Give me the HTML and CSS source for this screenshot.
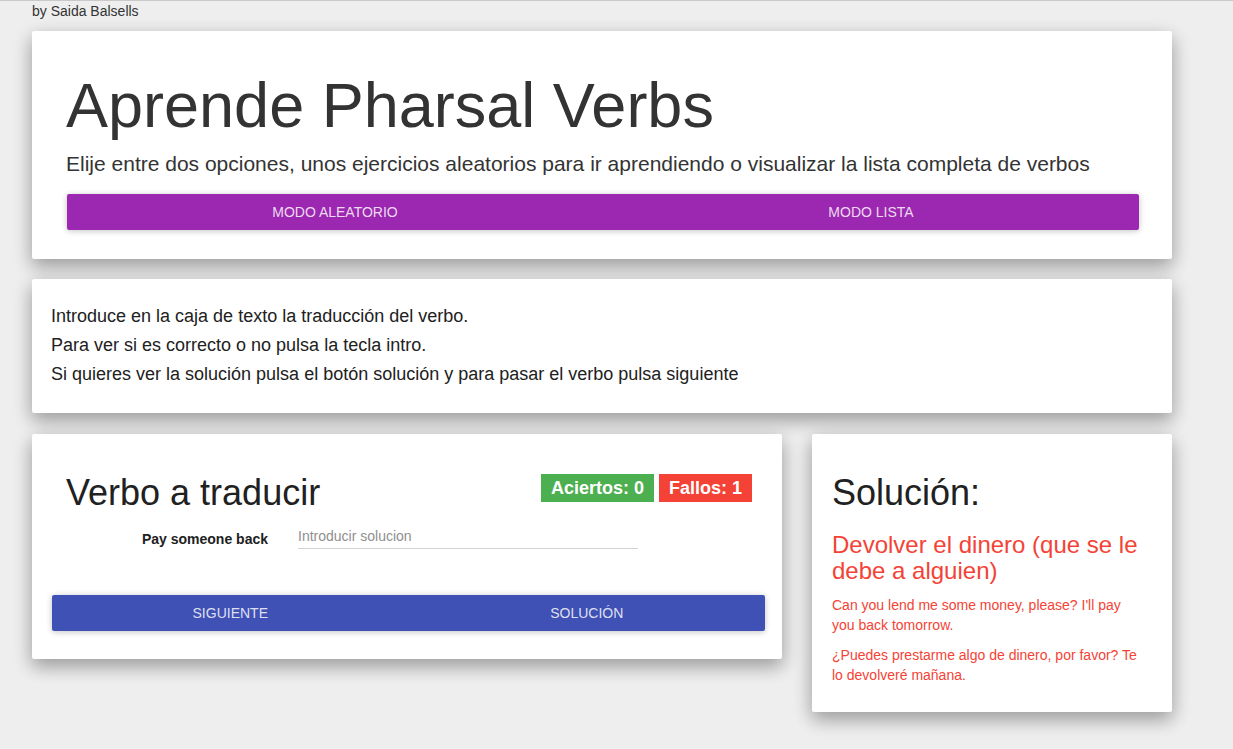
FILE: index.html
```html
<!DOCTYPE html>
<html lang="es">
<head>
<meta charset="utf-8">
<title>Aprende Pharsal Verbs</title>
<link rel="stylesheet" href="styles.css">
</head>
<body>
<div class="byline">by Saida Balsells</div>
<main class="page">
  <section class="card hero">
    <h1 class="hero-title">Aprende Pharsal Verbs</h1>
    <p class="hero-sub">Elije entre dos opciones, unos ejercicios aleatorios para ir aprendiendo o visualizar la lista completa de verbos</p>
    <div class="btn-row">
      <button class="btn btn-purple">MODO ALEATORIO</button>
      <button class="btn btn-purple">MODO LISTA</button>
    </div>
  </section>

  <section class="card info">
    <p>Introduce en la caja de texto la traducción del verbo.</p>
    <p>Para ver si es correcto o no pulsa la tecla intro.</p>
    <p>Si quieres ver la solución pulsa el botón solución y para pasar el verbo pulsa siguiente</p>
  </section>

  <div class="grid">
    <section class="card exercise">
      <div class="ex-head">
        <h2 class="card-title">Verbo a traducir</h2>
        <div class="badges">
          <span class="badge badge-ok">Aciertos: 0</span>
          <span class="badge badge-fail">Fallos: 1</span>
        </div>
      </div>
      <div class="ex-form">
        <label class="verb-label" for="sol">Pay someone back</label>
        <input id="sol" class="sol-input" type="text" placeholder="Introducir solucion">
      </div>
      <div class="btn-row ex-btns">
        <button class="btn btn-blue">SIGUIENTE</button>
        <button class="btn btn-blue">SOLUCIÓN</button>
      </div>
    </section>

    <section class="card solution">
      <h2 class="card-title">Solución:</h2>
      <h3 class="sol-meaning">Devolver el dinero (que se le debe a alguien)</h3>
      <p class="sol-text">Can you lend me some money, please? I'll pay you back tomorrow.</p>
      <p class="sol-text">¿Puedes prestarme algo de dinero, por favor? Te lo devolveré mañana.</p>
    </section>
  </div>
</main>
</body>
</html>
```

FILE: styles.css
```css
* { box-sizing: border-box; }

html, body {
  margin: 0;
  padding: 0;
}

body {
  background: #eeeeee;
  border-top: 1px solid #c9c9c9;
  font-family: "Liberation Sans", Arial, sans-serif;
  color: #333;
  height: 749px;
}

.byline {
  padding-left: 32px;
  font-size: 14px;
  line-height: 20px;
  color: #333;
}

.page {
  width: 1140px;
  margin: 10px 0 0 32px;
}

.card {
  background: #fff;
  border-radius: 2px;
  box-shadow: 0 8px 17px 0 rgba(0,0,0,0.2), 0 6px 20px 0 rgba(0,0,0,0.19);
}

/* Hero */
.hero {
  padding: 40px 33px 29px 34px;
}

.hero-title {
  margin: 0;
  font-size: 63px;
  line-height: 69px;
  font-weight: normal;
  color: #333;
}

.hero-sub {
  margin: 9px 0 16px;
  font-size: 21px;
  line-height: 29px;
  color: #333;
}

.btn-row {
  display: flex;
  border-radius: 2px;
  box-shadow: 0 1px 6px rgba(0,0,0,0.12), 0 1px 6px rgba(0,0,0,0.12);
}

.hero .btn-row {
  margin-left: 1px;
}

.btn {
  flex: 1;
  height: 36px;
  border: 0;
  font-family: "Liberation Sans", Arial, sans-serif;
  font-size: 14px;
  color: rgba(255,255,255,0.84);
  padding: 0;
}

.btn-row .btn:first-child { border-radius: 2px 0 0 2px; }
.btn-row .btn:last-child { border-radius: 0 2px 2px 0; }

.btn-purple { background: #9c27b0; }
.btn-blue { background: #3f51b5; }

/* Info */
.info {
  margin-top: 20px;
  padding: 23px 20px 24px 19px;
}

.info p {
  margin: 0;
  font-size: 18px;
  line-height: 29px;
  color: #212121;
}

/* Grid */
.grid {
  display: grid;
  grid-template-columns: 750px 360px;
  column-gap: 30px;
  align-items: start;
  margin-top: 21px;
}

.card-title {
  margin: 0;
  font-size: 36px;
  line-height: 40px;
  font-weight: normal;
  color: #212121;
}

.exercise {
  padding: 39px 30px 28px 34px;
}

.ex-head {
  display: flex;
  justify-content: space-between;
  align-items: flex-start;
}

.badges {
  display: flex;
  gap: 5px;
  margin-top: 1px;
}

.badge {
  display: block;
  height: 28px;
  line-height: 28px;
  padding: 0 10px;
  font-size: 18px;
  font-weight: bold;
  color: #fff;
}

.badge-ok { background: #4caf50; }
.badge-fail { background: #f44336; }

.ex-form {
  display: flex;
  align-items: flex-start;
  gap: 30px;
  margin-top: 5px;
}

.verb-label {
  width: 202px;
  margin-top: 11px;
  text-align: right;
  font-size: 14px;
  line-height: 20px;
  font-weight: bold;
  color: #212121;
}

.sol-input {
  width: 340px;
  height: 31px;
  padding: 8px 0 2px;
  border: 0;
  border-bottom: 1px solid #d2d2d2;
  font-family: "Liberation Sans", Arial, sans-serif;
  font-size: 14px;
  line-height: 20px;
  color: #333;
  outline: none;
  background: transparent;
}

.sol-input::placeholder {
  color: #8f8f8f;
}

.ex-btns {
  margin: 46px -13px 0 -14px;
}

/* Solution */
.solution {
  padding: 39px 30px 17px 20px;
}

.sol-meaning {
  margin: 19px 0 11px;
  font-size: 24px;
  line-height: 26px;
  font-weight: normal;
  color: #f44336;
}

.sol-text {
  margin: 0 0 10px;
  font-size: 14px;
  line-height: 20px;
  color: #f44336;
}
```
